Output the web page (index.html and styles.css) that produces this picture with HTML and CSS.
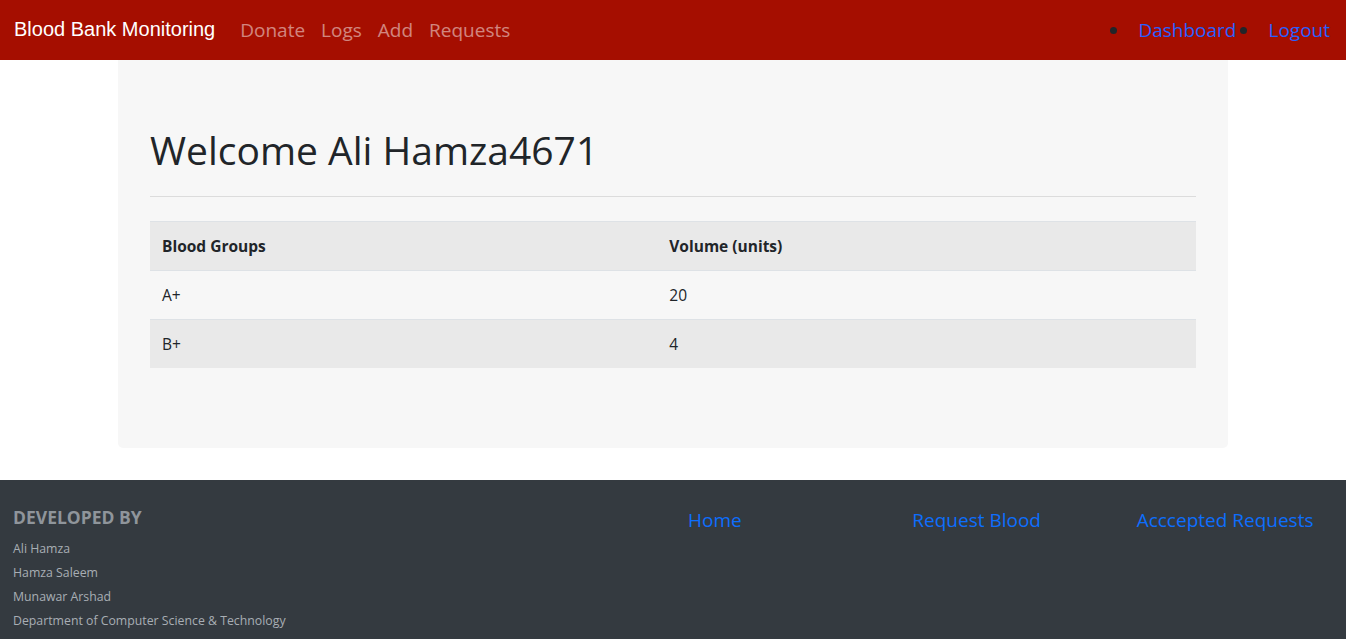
FILE: index.html
```html
<!DOCTYPE html>
<html lang="en">
<head>
<meta charset="utf-8">
<title>Blood Bank Monitoring</title>
<link rel="stylesheet" href="styles.css">
</head>
<body>
<nav class="navbar">
  <a class="brand" href="#">Blood Bank Monitoring</a>
  <div class="nav-links">
    <a href="#">Donate</a>
    <a href="#">Logs</a>
    <a href="#">Add</a>
    <a href="#">Requests</a>
  </div>
  <ul class="nav-right">
    <li><a href="#">Dashboard</a></li>
    <li><a href="#">Logout</a></li>
  </ul>
</nav>

<main class="jumbotron">
  <h1 class="welcome">Welcome Ali Hamza4671</h1>
  <hr class="divider">
  <table class="groups">
    <thead>
      <tr><th class="col-group">Blood Groups</th><th>Volume (units)</th></tr>
    </thead>
    <tbody>
      <tr><td>A+</td><td>20</td></tr>
      <tr class="striped"><td>B+</td><td>4</td></tr>
    </tbody>
  </table>
</main>

<footer class="footer">
  <div class="dev">
    <h5 class="dev-title">DEVELOPED BY</h5>
    <p>Ali Hamza</p>
    <p>Hamza Saleem</p>
    <p>Munawar Arshad</p>
    <p>Department of Computer Science &amp; Technology</p>
  </div>
  <div class="flink"><a href="#">Home</a></div>
  <div class="flink"><a href="#">Request Blood</a></div>
  <div class="flink"><a href="#">Acccepted Requests</a></div>
</footer>
</body>
</html>
```
FILE: styles.css
```css
* { box-sizing: border-box; }
body {
  margin: 0;
  font-family: "Open Sans", "Noto Sans", sans-serif;
  color: #212529;
  background: #fff;
}
a { text-decoration: none; }

.navbar {
  display: flex;
  align-items: center;
  height: 60px;
  background: #a50e00;
  padding: 0 16px 0 14px;
}
.brand {
  font-family: "Liberation Sans", Arial, sans-serif;
  font-size: 20px;
  color: #fff;
  margin-right: 17px;
  margin-top: -2px;
}
.nav-links { display: flex; }
.nav-links a {
  font-size: 19px;
  color: rgba(255, 255, 255, 0.5);
  padding: 0 8px;
}
.nav-right {
  display: flex;
  margin: 0 0 0 auto;
  padding: 0;
  list-style: none;
}
.nav-right li {
  display: flex;
  align-items: center;
}
.nav-right li + li { margin-left: 4px; }
.nav-right li::before {
  content: "";
  width: 7px;
  height: 7px;
  border-radius: 50%;
  background: #212529;
  margin-right: 21px;
}
.nav-right a {
  font-size: 19px;
  color: #2860ff;
}

.jumbotron {
  width: 1110px;
  margin: 0 auto;
  background: #f7f7f7;
  padding: 64px 32px;
  border-radius: 0 0 5px 5px;
}
.welcome {
  margin: 0 0 8px;
  font-size: 39px;
  font-weight: 500;
  line-height: 48px;
  padding-top: 2px;
}
.divider {
  margin: 22px 0 24px;
  border: 0;
  border-top: 1px solid #dcdcdc;
}
.groups {
  width: 100%;
  border-collapse: collapse;
  margin-bottom: 16px;
  font-size: 15.5px;
}
.groups th, .groups td {
  text-align: left;
  padding: 12px;
  line-height: 24px;
  border-top: 1px solid #dee2e6;
}
.groups th { font-weight: 700; }
.col-group { width: 48.5%; }
.groups thead tr { background: #e9e9e9; }
.groups .striped { background: #e9e9e9; }

.footer {
  margin-top: 32px;
  background: #343a40;
  display: grid;
  grid-template-columns: 50% 1fr 1fr 1fr;
  padding: 25px 0 30px;
}
.dev { padding-left: 13px; }
.dev-title {
  margin: 0 0 8px;
  font-size: 17.5px;
  font-weight: 700;
  line-height: 24px;
  color: #8f959b;
}
.dev p {
  margin: 0;
  font-size: 12.3px;
  line-height: 24px;
  color: #a8aeb4;
}
.flink { padding-left: 15px; }
.flink a {
  font-size: 19px;
  line-height: 30px;
  color: #0d6efd;
}
```
